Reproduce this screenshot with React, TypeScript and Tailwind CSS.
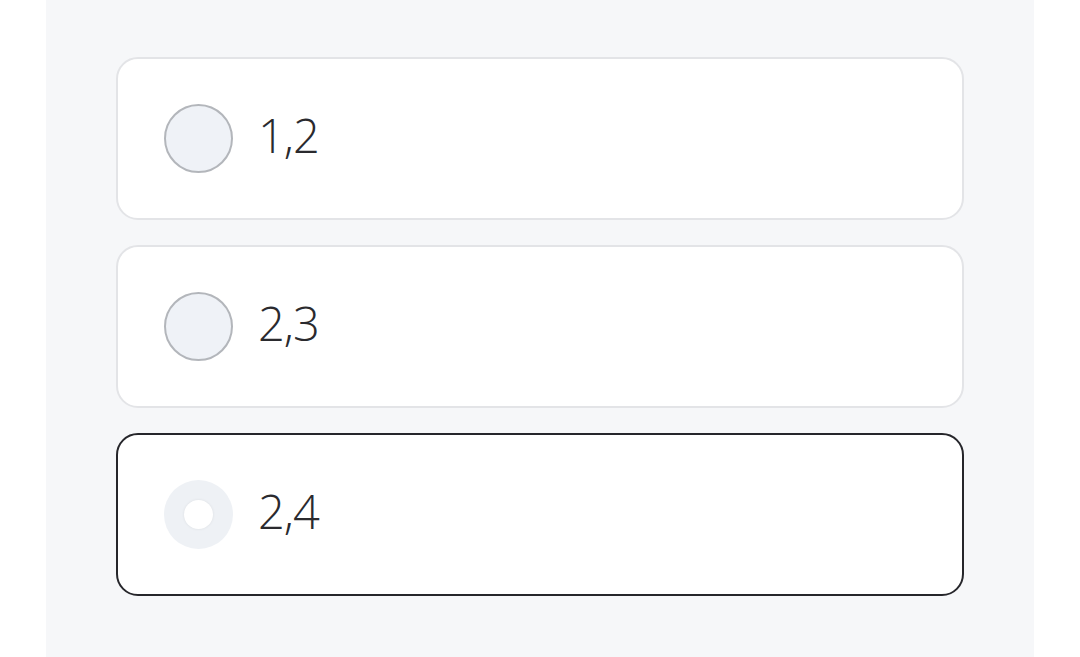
import { useState } from "react";

const options = ["1,2", "2,3", "2,4"];

export default function App() {
  const [selected, setSelected] = useState(2);

  return (
    <div className="min-h-[657px] bg-white" style={{ fontFamily: '"Open Sans", "Noto Sans", sans-serif' }}>
      <div className="mx-[46px] flex min-h-[657px] flex-col gap-[25px] bg-[#f6f7f9] px-[70px] pt-[57px] pb-[60px]">
        {options.map((label, i) => {
          const isSelected = i === selected;
          return (
            <button
              key={label}
              type="button"
              onClick={() => setSelected(i)}
              className={`flex h-[163px] items-center gap-[25px] rounded-[22px] border-2 bg-white pl-[46px] text-left ${
                isSelected ? "border-[#26262b]" : "border-[#e3e4e7]"
              }`}
            >
              {isSelected ? (
                <span className="flex h-[69px] w-[69px] shrink-0 items-center justify-center rounded-full bg-[#eef1f5]">
                  <span className="h-[29px] w-[29px] rounded-full bg-white shadow-[0_0_3px_rgba(0,0,0,0.08)]" />
                </span>
              ) : (
                <span className="h-[69px] w-[69px] shrink-0 rounded-full border-2 border-[#b3b6bb] bg-[#eff2f7]" />
              )}
              <span className="-mt-[7px] text-[47px] font-light leading-none tracking-[-1px] text-[#2a2a2e]">{label}</span>
            </button>
          );
        })}
      </div>
    </div>
  );
}
